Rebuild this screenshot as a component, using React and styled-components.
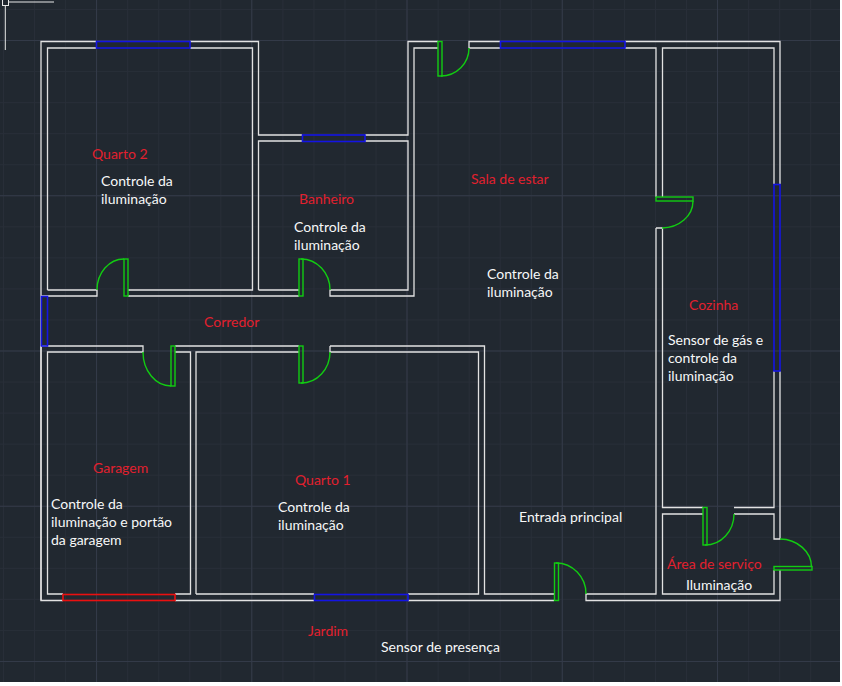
import styled, { createGlobalStyle } from "styled-components"

const GlobalStyle = createGlobalStyle`
  html, body { margin: 0; padding: 0; background: #fff; }
`

const Canvas = styled.div`
  position: relative;
  width: 840px;
  height: 682px;
  overflow: hidden;
  background-color: #212830;
  background-image:
    linear-gradient(to right, #333a48 1px, transparent 1px),
    linear-gradient(to bottom, #333a48 1px, transparent 1px),
    linear-gradient(to right, #282e38 1px, transparent 1px),
    linear-gradient(to bottom, #282e38 1px, transparent 1px);
  background-size: 155.25px 155.25px, 155.25px 155.25px, 31.05px 31.05px, 31.05px 31.05px;
  background-position: 96px 0, 0 40px, 3px 0, 0 9px;
`

const Plan = styled.svg`
  position: absolute;
  left: 0;
  top: 0;
`

const Label = styled.div`
  position: absolute;
  left: ${p => p.$x}px;
  top: ${p => p.$y - 9}px;
  font-family: Lato, "Open Sans", sans-serif;
  font-size: 14px;
  line-height: 18px;
  white-space: nowrap;
  color: ${p => (p.$room ? "#e2202e" : "#f7f8f8")};
`

const WALL = "#e2e2e2"
const GREEN = "#12cc12"
const BLUE = "#1414e4"
const RED = "#ea1010"

// wall runs, all in page pixels
const walls = [
  // quarto 2, outer + inner
  "M41 600.5V41.5H96M190 41.5H258.5V135H302M365 135H408V41.5H438",
  "M47.5 290V48H96M190 48H252.5V290H128M47.5 290H97V296H41M128 296H299",
  // banheiro
  "M258.5 290V141H302M365 141H408V290H330V296H414V48H438M258.5 290H299",
  // sala / cozinha top
  "M469 48V41.5H500M469 48H500M625 41.5H780V184M625 48H656V197M662.5 197V48H774V184",
  // cozinha lower part
  "M656 228H662.5V507.5H703M734 507.5H774V371M780 371V539H774V514H734M703 514H662.5V594H774V570M780 570V600.5H586V594H656V228",
  // corredor and garagem
  "M41 346H143V352H47.5V594H63M175 594H190.5V352H175M175 346H299M196 594V352H299M330 346V352H478.5V594H408M330 346H484.5V594H554M196 594H314",
  // bottom outer
  "M41 346V600.5H63M175 600.5H314M408 600.5H554",
]

const doors = [
  { rect: [438, 41.5, 4, 34.5], arc: "M441 76A28 28 0 0 0 469 48" },
  { rect: [656, 197, 37, 4], arc: "M693 201A31 27 0 0 1 662 228" },
  { rect: [124, 259, 4, 37], arc: "M124 259A27 31 0 0 0 97 290" },
  { rect: [299, 259, 4, 37], arc: "M301 259A29 31 0 0 1 330 290" },
  { rect: [171, 346, 4, 40], arc: "M171 386A28 34 0 0 1 143 352" },
  { rect: [299, 346, 4, 37], arc: "M301 383A29 31 0 0 0 330 352" },
  { rect: [703, 507.5, 4, 37.5], arc: "M705 545A29 31 0 0 0 734 514" },
  { rect: [774, 566.5, 38, 3.5], arc: "M780 539A32 28 0 0 1 811.5 567" },
  { rect: [554.5, 563, 4, 37.5], arc: "M556 563A30 31 0 0 1 586 594" },
]

const windows = [
  { x: 96.5, y: 41.5, w: 93.5, h: 6.5, color: BLUE },
  { x: 302.5, y: 135, w: 62.5, h: 6.5, color: BLUE },
  { x: 500.5, y: 41.5, w: 124.5, h: 6.5, color: BLUE },
  { x: 774, y: 184.5, w: 6, h: 186.5, color: BLUE },
  { x: 41.5, y: 296.5, w: 6, h: 49.5, color: BLUE },
  { x: 314.5, y: 594.5, w: 93.5, h: 6, color: BLUE },
  { x: 63, y: 594.5, w: 112, h: 6, color: RED },
]

const rooms = [
  { text: "Quarto 2", x: 92, y: 154 },
  { text: "Banheiro", x: 299, y: 199 },
  { text: "Sala de estar", x: 471, y: 179 },
  { text: "Cozinha", x: 689, y: 305 },
  { text: "Corredor", x: 204, y: 322 },
  { text: "Garagem", x: 93, y: 468 },
  { text: "Quarto 1", x: 295, y: 480 },
  { text: "Área de serviço", x: 667, y: 564 },
  { text: "Jardim", x: 308, y: 631 },
]

const notes = [
  { lines: ["Controle da", "iluminação"], x: 101, y: 181 },
  { lines: ["Controle da", "iluminação"], x: 294, y: 227 },
  { lines: ["Controle da", "iluminação"], x: 487, y: 274 },
  { lines: ["Sensor de gás e", "controle da", "iluminação"], x: 668, y: 340 },
  { lines: ["Controle da", "iluminação e portão", "da garagem"], x: 51, y: 504 },
  { lines: ["Controle da", "iluminação"], x: 278, y: 507 },
  { lines: ["Entrada principal"], x: 519, y: 517 },
  { lines: ["Iluminação"], x: 686, y: 585 },
  { lines: ["Sensor de presença"], x: 381, y: 647 },
]

const App = () => {
  return (
    <Canvas>
      <GlobalStyle />
      <Plan width="840" height="682" fill="none">
        <path d="M8 2H54M5.3 6V50" stroke="#e8e8e8" strokeWidth="1" />
        <rect x="2.5" y="-1" width="6" height="6.5" stroke="#e8e8e8" strokeWidth="1" />
        {walls.map((d, i) => (
          <path key={i} d={d} stroke={WALL} strokeWidth="1.3" />
        ))}
        {windows.map((w, i) => (
          <rect key={i} x={w.x} y={w.y} width={w.w} height={w.h} stroke={w.color} strokeWidth="1.6" />
        ))}
        {doors.map((d, i) => (
          <g key={i} stroke={GREEN} strokeWidth="1.4">
            <rect x={d.rect[0]} y={d.rect[1]} width={d.rect[2]} height={d.rect[3]} />
            <path d={d.arc} />
          </g>
        ))}
      </Plan>
      {rooms.map(r => (
        <Label key={r.text} $room $x={r.x} $y={r.y}>{r.text}</Label>
      ))}
      {notes.map((n, i) => (
        <Label key={i} $x={n.x} $y={n.y}>
          {n.lines.map(l => <div key={l}>{l}</div>)}
        </Label>
      ))}
    </Canvas>
  )
}

export default App
